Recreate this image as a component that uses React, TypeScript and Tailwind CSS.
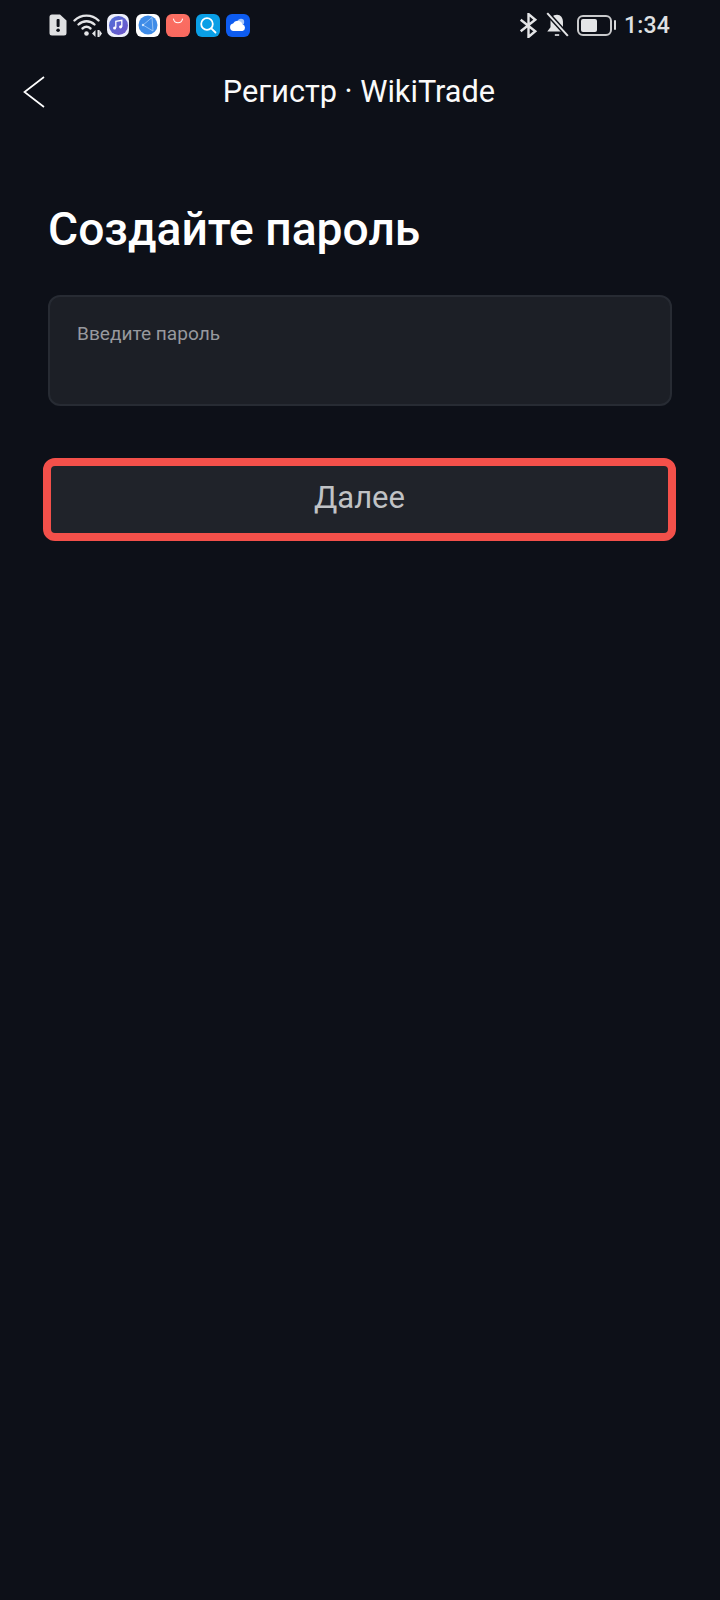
export default function App() {
  return (
    <div className="w-[720px] h-[1600px] bg-[#0d1018] overflow-hidden font-['Roboto',sans-serif] text-white">
      {/* Status bar */}
      <div className="h-[50px] pl-[49px] pr-[50px] flex items-center justify-between">
        <div className="flex items-center h-[24px]">
          <svg width="18" height="22" viewBox="0 0 18 22" className="mr-[6px]">
            <path d="M3 0.500h8l6.500 6V19a2.500 2.500 0 0 1-2.500 2.500H3A2.500 2.500 0 0 1 0.500 19V3A2.500 2.500 0 0 1 3 .5z" fill="#dfe0e2" />
            <rect x="7.600" y="5" width="3" height="8" rx="1" fill="#0d1018" />
            <circle cx="9.100" cy="16.300" r="1.800" fill="#0d1018" />
          </svg>
          <svg width="30" height="24" viewBox="0 0 30 24" className="mr-[4px]">
            <g fill="none" stroke="#e4e5e7" strokeWidth="2.400" strokeLinecap="round">
              <path d="M1.500 7.500C8 1 19 1 25.500 7.500" />
              <path d="M5.500 11.500C10 7.200 17 7.200 21.500 11.500" />
              <path d="M9.500 15.500C12 13.300 15 13.300 17.500 15.500" />
            </g>
            <circle cx="13.500" cy="20.500" r="2.300" fill="#e4e5e7" />
            <path d="M19 20.500l3.500-3.500v7zM24.500 17h1.800v7h-1.800zM26.500 17l2.500 3.500-2.500 3.500z" fill="#e4e5e7" />
          </svg>
          <div className="w-[22px] h-[23px] rounded-[7px] bg-[#eef0fb] flex items-center justify-center mr-[7px]">
            <div className="w-[19px] h-[19px] rounded-full bg-gradient-to-br from-[#4c6fd8] to-[#6f55c9] flex items-center justify-center">
              <svg width="12" height="12" viewBox="0 0 11 11">
                <path d="M3.500 8V2.200l5.500-1V7" fill="none" stroke="#fff" strokeWidth="1.200" />
                <circle cx="2.400" cy="8.200" r="1.400" fill="#fff" />
                <circle cx="7.900" cy="7.200" r="1.400" fill="#fff" />
              </svg>
            </div>
          </div>
          <div className="w-[24px] h-[23px] rounded-[6px] bg-white flex items-center justify-center mr-[6px]">
            <svg width="20" height="20" viewBox="0 0 20 20">
              <circle cx="10" cy="10" r="9.500" fill="#3f8ce8" />
              <path d="M14 2.500L5 10l10 6M14 2.500L15 16" fill="none" stroke="#9cc6f5" strokeWidth="0.900" />
              <circle cx="5" cy="10" r="1.200" fill="#cfe4fb" />
            </svg>
          </div>
          <div className="w-[24px] h-[23px] rounded-[6px] bg-gradient-to-b from-[#fb6f63] to-[#f8695f] flex justify-center mr-[6px]">
            <svg width="12" height="8" viewBox="0 0 12 8" className="mt-[4px]">
              <path d="M1.500 1C2.500 6 9.500 6 10.500 1" fill="none" stroke="#fff" strokeWidth="1.100" strokeLinecap="round" />
            </svg>
          </div>
          <div className="w-[24px] h-[23px] rounded-[6px] bg-[#0a9fe6] flex items-center justify-center mr-[6px]">
            <svg width="18" height="18" viewBox="0 0 18 18">
              <circle cx="8" cy="8" r="5.800" fill="none" stroke="#fff" strokeWidth="1.800" />
              <path d="M12.300 12.300L16.500 16.500" stroke="#fff" strokeWidth="1.800" strokeLinecap="round" />
            </svg>
          </div>
          <div className="w-[24px] h-[23px] rounded-[6px] bg-[#0d5cf0] flex items-center justify-center">
            <svg width="18" height="14" viewBox="0 0 18 14">
              <circle cx="12" cy="4" r="3.200" fill="#a9c8fa" />
              <path d="M4.500 13a3.800 3.800 0 0 1-.4-7.500A5 5 0 0 1 13.500 6.600 3.300 3.300 0 0 1 13.500 13z" fill="#fff" />
            </svg>
          </div>
        </div>
        <div className="flex items-center">
          <svg width="19" height="25" viewBox="0 0 18 24" className="mr-[7px]">
            <path d="M1.500 6.500L15.500 17.500L9 23V1L15.500 6.500L1.500 17.500" fill="none" stroke="#e4e5e7" strokeWidth="2.300" />
          </svg>
          <svg width="24" height="26" viewBox="0 0 22 24" className="mr-[8px]">
            <path d="M11 2.500c-4 0-6 3-6 6.500v5L2 18h16.500l-2-3V9c0-3.500-2-6.500-5.500-6.500z" fill="#e4e5e7" />
            <path d="M9 20.500h4v1.500h-4z" fill="#e4e5e7" />
            <path d="M2 1l19 21" stroke="#0d1018" strokeWidth="4.500" />
            <path d="M2 1l19 21" stroke="#e4e5e7" strokeWidth="1.900" />
          </svg>
          <div className="w-[35px] h-[21px] rounded-[6px] border-2 border-[#c9cacc] p-[2px] mr-[2px]">
            <div className="w-[16px] h-full rounded-[2px] bg-[#e4e5e7]" />
          </div>
          <div className="w-[2px] h-[10px] rounded-[1px] bg-[#d9dadc] mr-[8px]" />
          <span className="text-[23px] leading-[28px] mt-[1px] font-medium text-[#dfe0e2] tracking-[0.2px]">1:34</span>
        </div>
      </div>

      {/* Header */}
      <div className="relative h-[82px] flex items-center justify-center">
        <svg width="22" height="32" viewBox="0 0 22 32" className="absolute left-[23px] top-[26px]">
          <path d="M21 1L1.500 16L21 31" fill="none" stroke="#fff" strokeWidth="1.700" />
        </svg>
        <span className="text-[30.7px] leading-[36px] ml-[-2px] mt-[2px] text-[#fafafa]">Регистр · WikiTrade</span>
      </div>

      {/* Content */}
      <div className="px-[48px] pt-[69px]">
        <h1 className="text-[46.2px] leading-[56px] font-medium text-white">Создайте пароль</h1>
        <div className="mt-[38px] h-[111px] w-[624px] rounded-[12px] border-2 border-[#272b33] bg-[#1c1f26] pl-[27px] pt-[25px]">
          <span className="block text-[19.1px] leading-[24px] text-[#97999e]">Введите пароль</span>
        </div>
      </div>
      <div className="pl-[43px] mt-[52px]">
        <button className="w-[633px] h-[83px] rounded-[12px] border-[8px] border-[#f3504a] bg-[#20232a] text-[31px] text-[#c0c2c5] flex items-center justify-center pb-[2px]">
          Далее
        </button>
      </div>
    </div>
  );
}
